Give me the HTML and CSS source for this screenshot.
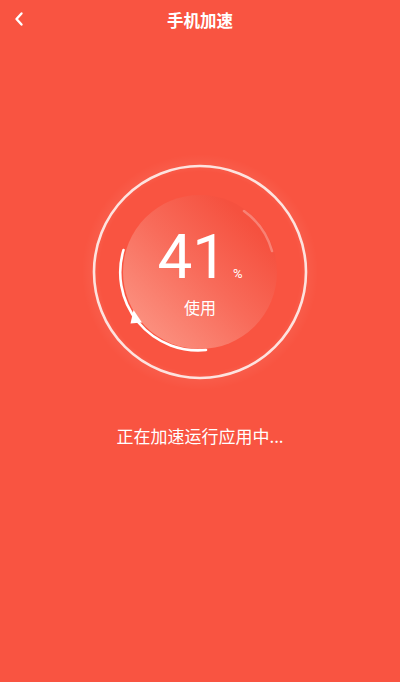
FILE: index.html
```html
<!DOCTYPE html>
<html lang="zh">
<head>
<meta charset="utf-8">
<title>手机加速</title>
<link rel="stylesheet" href="styles.css">
</head>
<body>
<div class="app">
  <header class="header">
    <svg class="back" width="12" height="16" viewBox="0 0 12 16"><path d="M8.5 2.5 L3.5 8 L8.5 13.5" fill="none" stroke="#fff" stroke-width="2.4" stroke-linecap="round" stroke-linejoin="round"/></svg>
    <h1 class="title">手机加速</h1>
  </header>
  <section class="gauge">
    <svg class="dial" width="240" height="240" viewBox="0 0 240 240">
      <defs>
        <linearGradient id="disc" x1="0" y1="1" x2="1" y2="0">
          <stop offset="0.15" stop-color="#fb8e7d"/>
          <stop offset="0.5" stop-color="#f86b5a"/>
          <stop offset="0.82" stop-color="#f5513f"/>
        </linearGradient>
        <radialGradient id="glow" cx="0.5" cy="0.5" r="0.5">
          <stop offset="0.85" stop-color="#ffffff" stop-opacity="0"/>
          <stop offset="0.9" stop-color="#ffffff" stop-opacity="0.05"/>
          <stop offset="1" stop-color="#ffffff" stop-opacity="0"/>
        </radialGradient>
      </defs>
      <circle cx="120" cy="120" r="118" fill="url(#glow)"/>
      <circle cx="120" cy="120" r="106" fill="none" stroke="#fde3df" stroke-width="2.6"/>
      <circle cx="120" cy="120" r="77" fill="url(#disc)"/>
      <path d="M43.5 98 A78 78 0 0 0 126 198" fill="none" stroke="#ffffff" stroke-width="2.6" stroke-linecap="round"/>
      <path d="M50.5 171.5 L53.5 158 L62 170.5 Z" fill="#ffffff"/>
      <path d="M164 59 A73 73 0 0 1 192 99" fill="none" stroke="#ffffff" stroke-opacity="0.28" stroke-width="2.6" stroke-linecap="round"/>
    </svg>
    <div class="readout">
      <div class="value"><span class="num">41</span><span class="pct">%</span></div>
      <div class="label">使用</div>
    </div>
  </section>
  <p class="status">正在加速运行应用中...</p>
</div>
</body>
</html>
```

FILE: styles.css
```css
html, body {
  margin: 0;
  padding: 0;
  background: #f95441;
}
body {
  font-family: "Noto Sans CJK SC", "Noto Sans", Roboto, sans-serif;
  color: #ffffff;
  width: 400px;
  height: 682px;
  overflow: hidden;
}
.app {
  display: flex;
  flex-direction: column;
  align-items: center;
}
.header {
  width: 100%;
  height: 40px;
  display: flex;
  align-items: center;
  justify-content: center;
  position: relative;
}
.back {
  position: absolute;
  left: 13px;
  top: 11px;
}
.title {
  margin: 0;
  font-size: 16.5px;
  font-weight: 700;
  line-height: 20px;
}
.gauge {
  margin-top: 112px;
  width: 240px;
  height: 240px;
  position: relative;
}
.dial {
  display: block;
}
.readout {
  position: absolute;
  inset: 0;
  padding-top: 74px;
  display: flex;
  flex-direction: column;
  align-items: center;
}
.value {
  display: flex;
  align-items: baseline;
  height: 62px;
}
.num {
  font-family: Roboto, "Noto Sans", sans-serif;
  font-size: 62px;
  line-height: 62px;
  font-weight: 400;
}
.pct {
  font-family: Roboto, "Noto Sans", sans-serif;
  font-size: 13px;
  margin-left: 6px;
}
.label {
  margin-top: 9px;
  font-size: 16px;
  line-height: 20px;
}
.status {
  margin: 33px 0 0;
  font-size: 17px;
  line-height: 22px;
}
```
